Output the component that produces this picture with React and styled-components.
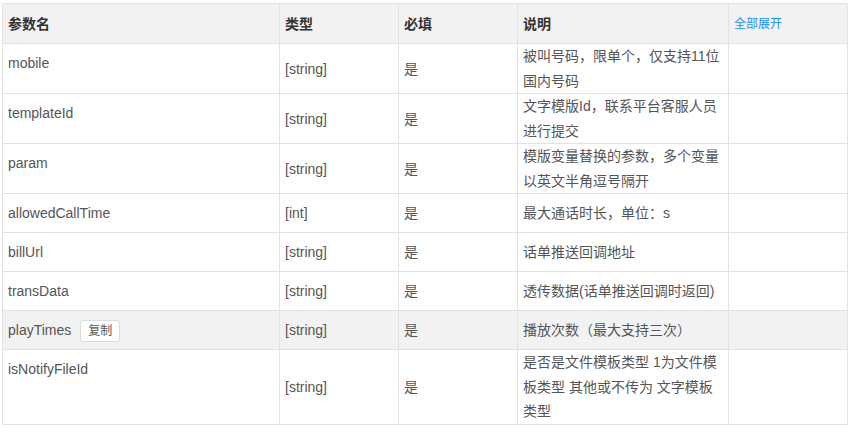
import React from 'react'
import styled, { createGlobalStyle } from 'styled-components'

const GlobalStyle = createGlobalStyle`
  html, body {
    margin: 0;
    padding: 0;
    background: #fff;
  }
  body {
    font-family: "Liberation Sans", Arial, "Noto Sans CJK SC", sans-serif;
    font-size: 14px;
    color: #555;
  }
`

const Page = styled.div`
  padding: 3px 0 0 2px;
`

const Table = styled.table`
  width: 846px;
  table-layout: fixed;
  border-collapse: separate;
  border-spacing: 0;
  border-top: 1px solid #e2e2e2;
  border-left: 1px solid #e2e2e2;
  border-radius: 2px;
`

const Head = styled.th`
  box-sizing: border-box;
  background: #f2f2f2;
  border-right: 1px solid #e2e2e2;
  border-bottom: 1px solid #e2e2e2;
  padding: 7px 5px;
  line-height: 24px;
  text-align: left;
  font-weight: bold;
  color: #333;
  font-size: 14px;
  &:last-child {
    border-top-right-radius: 2px;
  }
`

const ExpandAll = styled.span`
  font-weight: normal;
  font-size: 12px;
  color: #1890ff;
  cursor: pointer;
`

const Row = styled.tr`
  background: ${p => (p.$active ? '#f2f2f2' : '#fff')};
`

const Cell = styled.td`
  box-sizing: border-box;
  border-right: 1px solid #e2e2e2;
  border-bottom: 1px solid #e2e2e2;
  padding: ${p => (p.$wide ? '0 5px' : '7px 5px')};
  line-height: ${p => (p.$wide ? '24.5px' : '24px')};
  vertical-align: ${p => (p.$top ? 'top' : 'middle')};
  color: #555;
  word-break: break-all;
`

const CopyButton = styled.button`
  display: inline-block;
  box-sizing: border-box;
  height: 22px;
  margin-left: 9px;
  padding: 0 7px;
  border: 1px solid #dcdcdc;
  border-radius: 3px;
  background: #fff;
  color: #555;
  font-family: inherit;
  font-size: 12px;
  line-height: 20px;
  vertical-align: middle;
  cursor: pointer;
`

const params = [
  { name: 'mobile', type: '[string]', desc: '被叫号码，限单个，仅支持11位国内号码' },
  { name: 'templateId', type: '[string]', desc: '文字模版Id，联系平台客服人员进行提交' },
  { name: 'param', type: '[string]', desc: '模版变量替换的参数，多个变量以英文半角逗号隔开' },
  { name: 'allowedCallTime', type: '[int]', desc: '最大通话时长，单位：s' },
  { name: 'billUrl', type: '[string]', desc: '话单推送回调地址' },
  { name: 'transData', type: '[string]', desc: '透传数据(话单推送回调时返回)' },
  { name: 'playTimes', type: '[string]', desc: '播放次数（最大支持三次）', copy: true },
  { name: 'isNotifyFileId', type: '[string]', desc: '是否是文件模板类型 1为文件模板类型 其他或不传为 文字模板类型' },
]

export default function App() {
  return (
    <>
      <GlobalStyle />
      <Page>
        <Table>
          <colgroup>
            <col style={{ width: 277 }} />
            <col style={{ width: 119 }} />
            <col style={{ width: 119 }} />
            <col style={{ width: 211 }} />
            <col style={{ width: 119 }} />
          </colgroup>
          <thead>
            <tr>
              <Head>参数名</Head>
              <Head>类型</Head>
              <Head>必填</Head>
              <Head>说明</Head>
              <Head><ExpandAll>全部展开</ExpandAll></Head>
            </tr>
          </thead>
          <tbody>
            {params.map(p => (
              <Row key={p.name} $active={p.copy}>
                <Cell $top>
                  {p.name}
                  {p.copy && <CopyButton>复制</CopyButton>}
                </Cell>
                <Cell>{p.type}</Cell>
                <Cell>是</Cell>
                <Cell $wide>{p.desc}</Cell>
                <Cell></Cell>
              </Row>
            ))}
          </tbody>
        </Table>
      </Page>
    </>
  )
}
